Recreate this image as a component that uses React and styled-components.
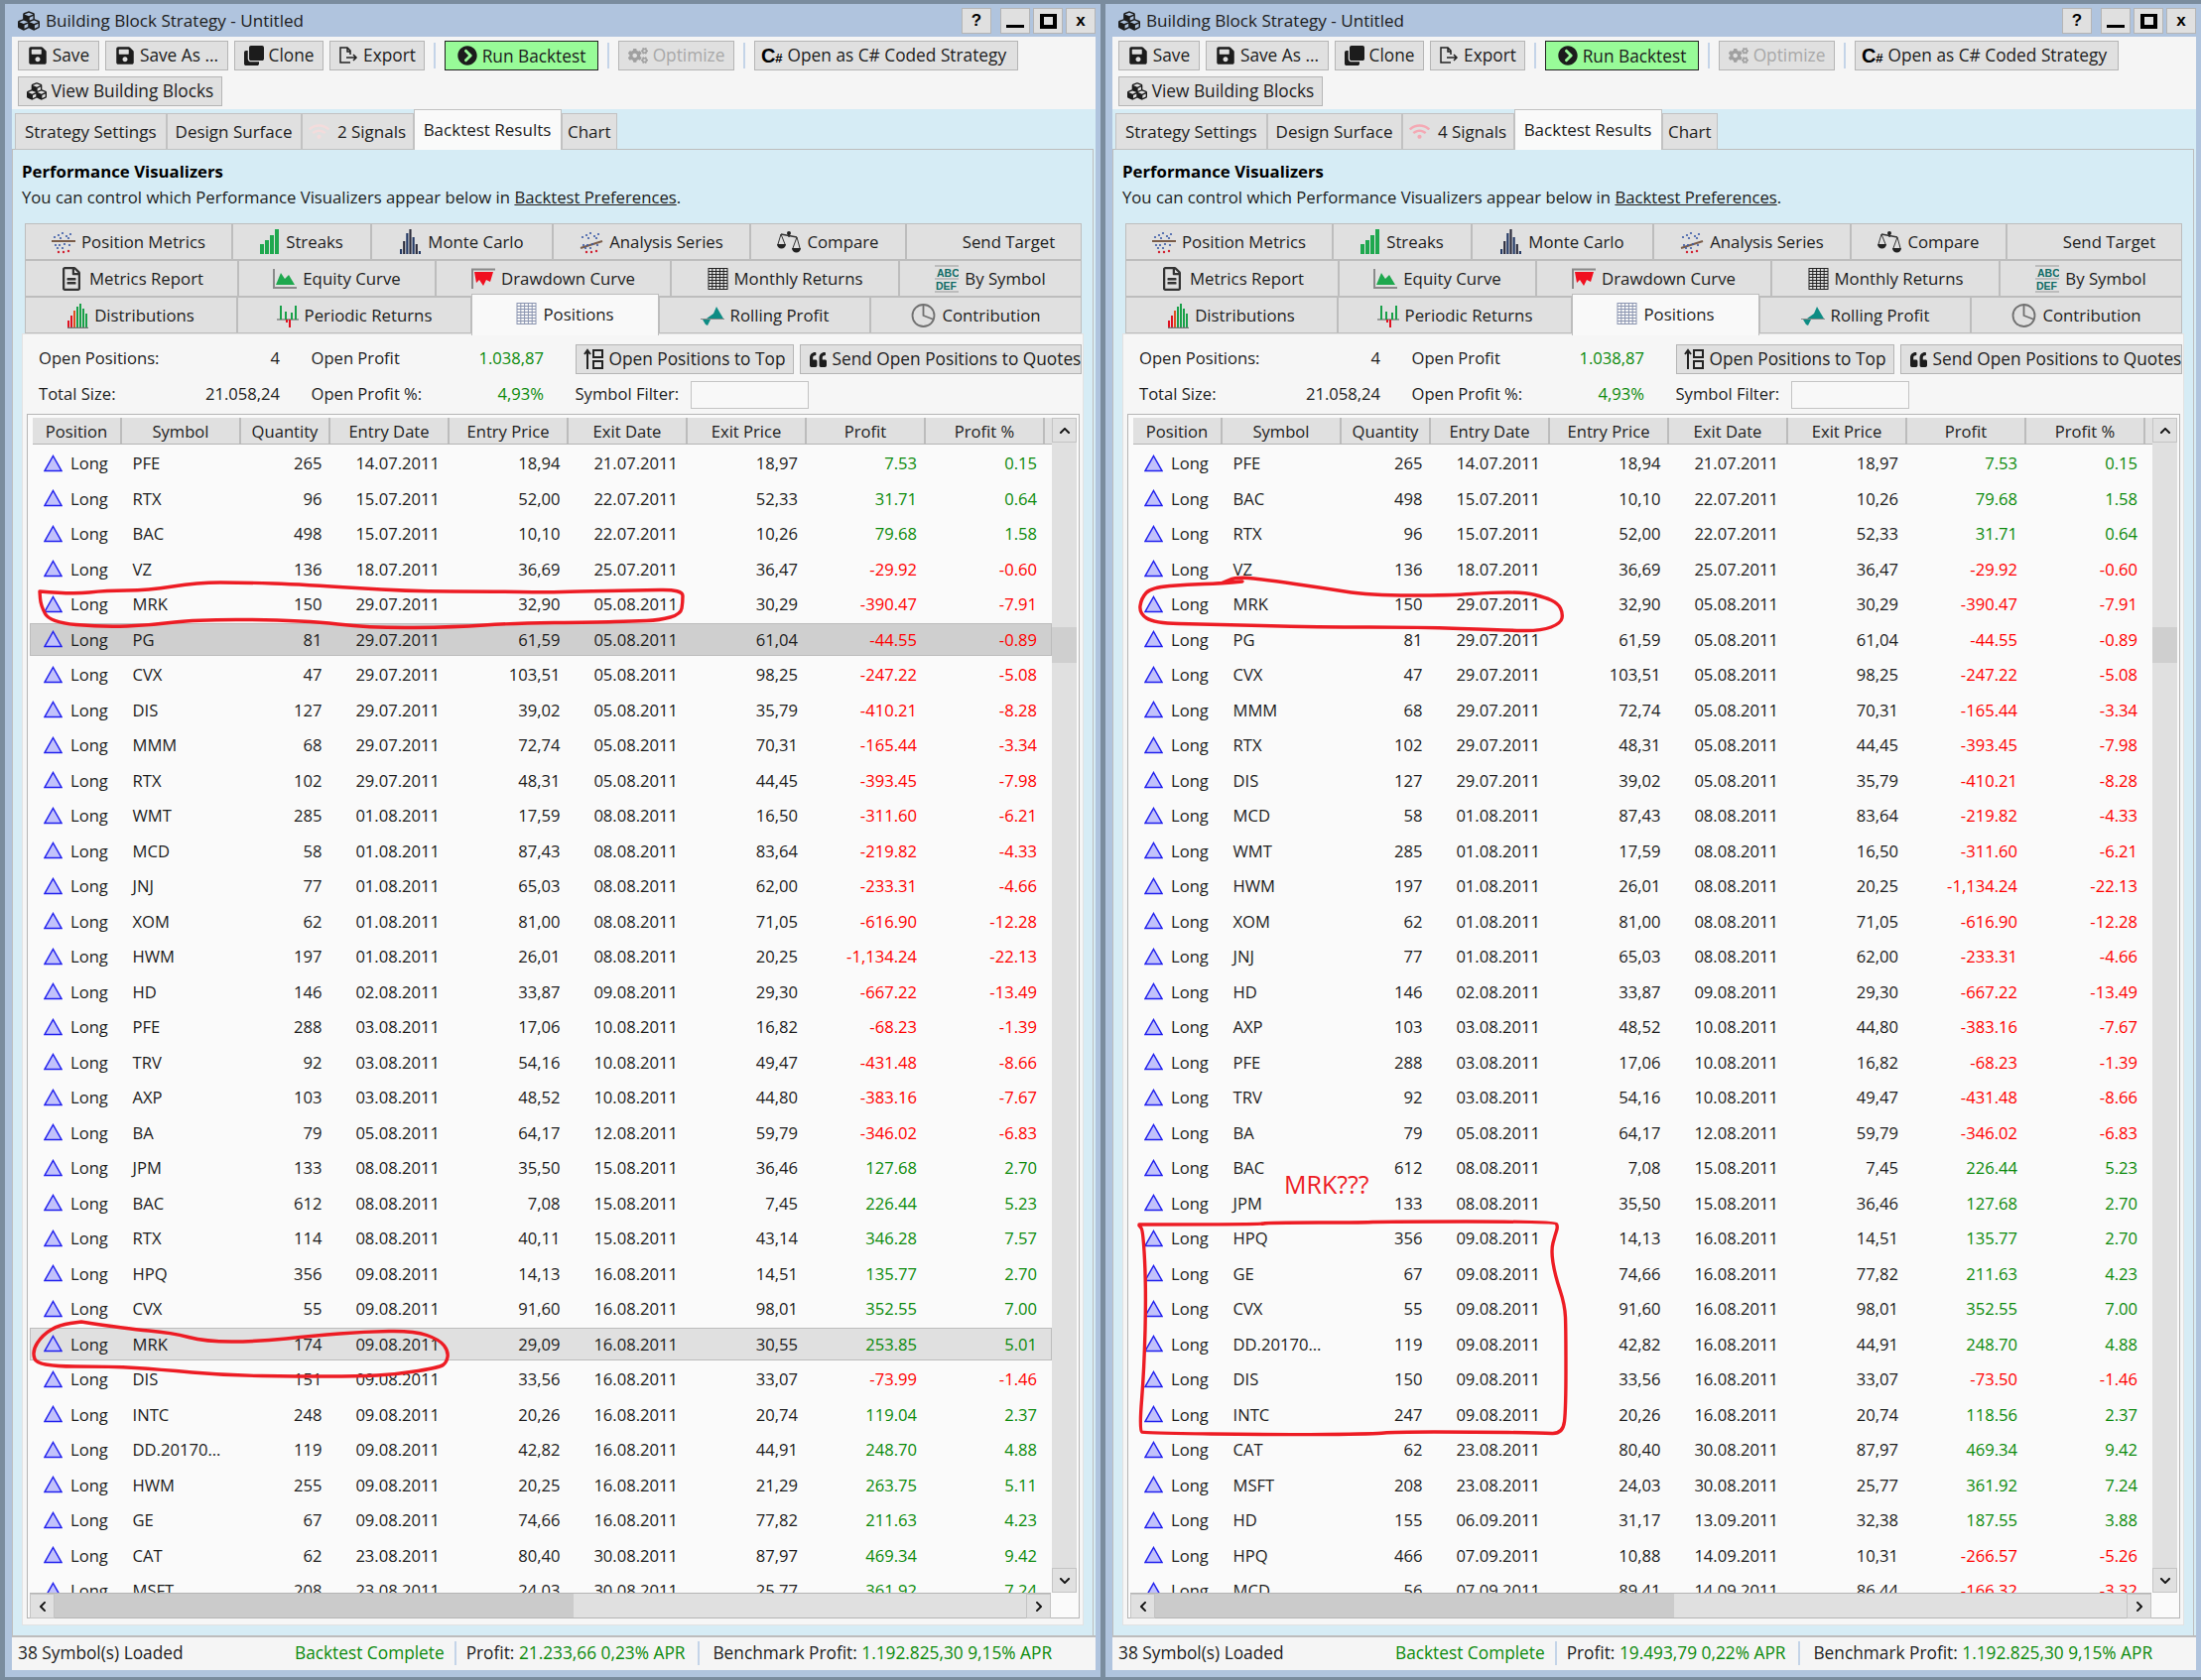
import React from "react";
import styled, { createGlobalStyle } from "styled-components";
import { FaSave, FaClone, FaCubes, FaChevronCircleRight, FaCogs, FaQuoteLeft, FaRegFileAlt, FaWifi, FaChevronUp, FaChevronDown, FaChevronLeft, FaChevronRight } from "react-icons/fa";

const leftRows = `PFE|265|14.07.2011|18,94|21.07.2011|18,97|7.53|0.15
RTX|96|15.07.2011|52,00|22.07.2011|52,33|31.71|0.64
BAC|498|15.07.2011|10,10|22.07.2011|10,26|79.68|1.58
VZ|136|18.07.2011|36,69|25.07.2011|36,47|-29.92|-0.60
MRK|150|29.07.2011|32,90|05.08.2011|30,29|-390.47|-7.91
PG|81|29.07.2011|61,59|05.08.2011|61,04|-44.55|-0.89
CVX|47|29.07.2011|103,51|05.08.2011|98,25|-247.22|-5.08
DIS|127|29.07.2011|39,02|05.08.2011|35,79|-410.21|-8.28
MMM|68|29.07.2011|72,74|05.08.2011|70,31|-165.44|-3.34
RTX|102|29.07.2011|48,31|05.08.2011|44,45|-393.45|-7.98
WMT|285|01.08.2011|17,59|08.08.2011|16,50|-311.60|-6.21
MCD|58|01.08.2011|87,43|08.08.2011|83,64|-219.82|-4.33
JNJ|77|01.08.2011|65,03|08.08.2011|62,00|-233.31|-4.66
XOM|62|01.08.2011|81,00|08.08.2011|71,05|-616.90|-12.28
HWM|197|01.08.2011|26,01|08.08.2011|20,25|-1,134.24|-22.13
HD|146|02.08.2011|33,87|09.08.2011|29,30|-667.22|-13.49
PFE|288|03.08.2011|17,06|10.08.2011|16,82|-68.23|-1.39
TRV|92|03.08.2011|54,16|10.08.2011|49,47|-431.48|-8.66
AXP|103|03.08.2011|48,52|10.08.2011|44,80|-383.16|-7.67
BA|79|05.08.2011|64,17|12.08.2011|59,79|-346.02|-6.83
JPM|133|08.08.2011|35,50|15.08.2011|36,46|127.68|2.70
BAC|612|08.08.2011|7,08|15.08.2011|7,45|226.44|5.23
RTX|114|08.08.2011|40,11|15.08.2011|43,14|346.28|7.57
HPQ|356|09.08.2011|14,13|16.08.2011|14,51|135.77|2.70
CVX|55|09.08.2011|91,60|16.08.2011|98,01|352.55|7.00
MRK|174|09.08.2011|29,09|16.08.2011|30,55|253.85|5.01
DIS|151|09.08.2011|33,56|16.08.2011|33,07|-73.99|-1.46
INTC|248|09.08.2011|20,26|16.08.2011|20,74|119.04|2.37
DD.20170...|119|09.08.2011|42,82|16.08.2011|44,91|248.70|4.88
HWM|255|09.08.2011|20,25|16.08.2011|21,29|263.75|5.11
GE|67|09.08.2011|74,66|16.08.2011|77,82|211.63|4.23
CAT|62|23.08.2011|80,40|30.08.2011|87,97|469.34|9.42
MSFT|208|23.08.2011|24,03|30.08.2011|25,77|361.92|7.24`;

const rightRows = `PFE|265|14.07.2011|18,94|21.07.2011|18,97|7.53|0.15
BAC|498|15.07.2011|10,10|22.07.2011|10,26|79.68|1.58
RTX|96|15.07.2011|52,00|22.07.2011|52,33|31.71|0.64
VZ|136|18.07.2011|36,69|25.07.2011|36,47|-29.92|-0.60
MRK|150|29.07.2011|32,90|05.08.2011|30,29|-390.47|-7.91
PG|81|29.07.2011|61,59|05.08.2011|61,04|-44.55|-0.89
CVX|47|29.07.2011|103,51|05.08.2011|98,25|-247.22|-5.08
MMM|68|29.07.2011|72,74|05.08.2011|70,31|-165.44|-3.34
RTX|102|29.07.2011|48,31|05.08.2011|44,45|-393.45|-7.98
DIS|127|29.07.2011|39,02|05.08.2011|35,79|-410.21|-8.28
MCD|58|01.08.2011|87,43|08.08.2011|83,64|-219.82|-4.33
WMT|285|01.08.2011|17,59|08.08.2011|16,50|-311.60|-6.21
HWM|197|01.08.2011|26,01|08.08.2011|20,25|-1,134.24|-22.13
XOM|62|01.08.2011|81,00|08.08.2011|71,05|-616.90|-12.28
JNJ|77|01.08.2011|65,03|08.08.2011|62,00|-233.31|-4.66
HD|146|02.08.2011|33,87|09.08.2011|29,30|-667.22|-13.49
AXP|103|03.08.2011|48,52|10.08.2011|44,80|-383.16|-7.67
PFE|288|03.08.2011|17,06|10.08.2011|16,82|-68.23|-1.39
TRV|92|03.08.2011|54,16|10.08.2011|49,47|-431.48|-8.66
BA|79|05.08.2011|64,17|12.08.2011|59,79|-346.02|-6.83
BAC|612|08.08.2011|7,08|15.08.2011|7,45|226.44|5.23
JPM|133|08.08.2011|35,50|15.08.2011|36,46|127.68|2.70
HPQ|356|09.08.2011|14,13|16.08.2011|14,51|135.77|2.70
GE|67|09.08.2011|74,66|16.08.2011|77,82|211.63|4.23
CVX|55|09.08.2011|91,60|16.08.2011|98,01|352.55|7.00
DD.20170...|119|09.08.2011|42,82|16.08.2011|44,91|248.70|4.88
DIS|150|09.08.2011|33,56|16.08.2011|33,07|-73.50|-1.46
INTC|247|09.08.2011|20,26|16.08.2011|20,74|118.56|2.37
CAT|62|23.08.2011|80,40|30.08.2011|87,97|469.34|9.42
MSFT|208|23.08.2011|24,03|30.08.2011|25,77|361.92|7.24
HD|155|06.09.2011|31,17|13.09.2011|32,38|187.55|3.88
HPQ|466|07.09.2011|10,88|14.09.2011|10,31|-266.57|-5.26
MCD|56|07.09.2011|89,41|14.09.2011|86,44|-166.32|-3.32`;

const parse = (s) => s.split("\n").map((l) => l.split("|"));

const GlobalStyle = createGlobalStyle`
  html, body { margin: 0; padding: 0; }
  body { font-family: "Open Sans", "Liberation Sans", sans-serif; font-size: 16.6px; color: #1c1c1c; }
`;

const Page = styled.div`
  position: relative;
  width: 2218px;
  height: 1693px;
  padding: 4px 0 3px 5px;
  box-sizing: border-box;
  background: #7a8c9e;
  display: flex;
  gap: 5px;
  overflow: hidden;
`;
const Win = styled.div`
  width: 1104px;
  display: flex;
  flex-direction: column;
  padding: 0 5px 7px 7px;
  box-sizing: border-box;
  background: #b0c4de;
`;
const TitleBar = styled.div`
  height: 33px;
  display: flex;
  align-items: center;
  padding-left: 6px;
  gap: 6px;
  flex: none;
  font-size: 17.1px;
  svg { font-size: 22px; }
`;
const TitleText = styled.span`
  flex: 1;
  padding-bottom: 1px;
`;
const WinBtns = styled.div`
  display: flex;
  margin-top: 1px;
`;
const WinBtn = styled.div`
  width: 30px;
  height: 26px;
  margin-left: ${(p) => p.$gap || 3}px;
  background: #e0e0e0;
  border: 1px solid #b5b5b5;
  box-sizing: border-box;
  display: flex;
  align-items: center;
  justify-content: center;
  font: bold 17px "Liberation Sans", sans-serif;
  color: #000;
`;
const MinBar = styled.span`
  width: 18px;
  height: 3px;
  margin-top: 10px;
  background: #000;
`;
const MaxBox = styled.span`
  width: 17px;
  height: 15px;
  box-sizing: border-box;
  border: solid #000;
  border-width: 3px 4px 4px;
`;
const Toolbar = styled.div`
  height: 73px;
  flex: none;
  background: #f5f5f5;
  padding: 4px 0 0 6px;
  box-sizing: border-box;
`;
const ToolRow = styled.div`
  display: flex;
  gap: 6px;
  height: 30px;
  margin-bottom: 6px;
`;
const ToolBtn = styled.div`
  width: ${(p) => p.$w}px;
  box-sizing: border-box;
  background: ${(p) => (p.$run ? "#98fb98" : "#e0e0e0")};
  border: 1px solid ${(p) => (p.$run ? "#222" : "#b5b5b5")};
  color: ${(p) => (p.$off ? "#a8a8a8" : "#1c1c1c")};
  font-size: 17.3px;
  padding: 0 ${(p) => p.$right || 0}px ${(p) => (p.$run ? 0 : 2)}px 0;
  display: flex;
  align-items: center;
  justify-content: center;
  gap: 5px;
  white-space: nowrap;
  overflow: hidden;
  svg { font-size: 20px; flex: none; margin-top: ${(p) => (p.$run ? 0 : 2)}px; color: ${(p) => (p.$off ? "#a0a0a0" : "#1c1c1c")}; }
`;
const ToolSep = styled.div`
  width: 2px;
  margin: 2px 3px;
  background: #c4d4e8;
`;
const CSharp = styled.span`
  font: 900 20px "Liberation Sans", sans-serif;
  color: #000;
  margin-top: 2px;
  small { font-size: 13px; }
`;
const Body = styled.div`
  flex: 1;
  min-height: 0;
  background: #d6ecf5;
  display: flex;
  flex-direction: column;
`;
const TabStrip = styled.div`
  height: 41px;
  flex: none;
  display: flex;
  align-items: flex-end;
  padding-left: 3px;
`;
const MainTab = styled.div`
  width: ${(p) => p.$w}px;
  height: ${(p) => (p.$on ? 41 : 37)}px;
  box-sizing: border-box;
  background: ${(p) => (p.$on ? "#fafafa" : "#e0e0e0")};
  border: 1px solid #c2c2c2;
  border-bottom: ${(p) => (p.$on ? "none" : "1px solid #c2c2c2")};
  font-size: 17px;
  display: flex;
  align-items: ${(p) => (p.$on ? "flex-start" : "center")};
  justify-content: center;
  padding-top: ${(p) => (p.$on ? 8 : 0)}px;
  gap: 8px;
  white-space: nowrap;
  position: relative;
  z-index: ${(p) => (p.$on ? 2 : 0)};
  svg { font-size: 21px; color: ${(p) => p.$tone}; }
`;
const Panel = styled.div`
  flex: 1;
  min-height: 0;
  margin: -1px 2px 0 0;
  border: 1px solid #bdbdbd;
  border-bottom: none;
  padding: 10px 0 0 9px;
  display: flex;
  flex-direction: column;
`;
const Heading = styled.div`
  height: 26px;
  line-height: 24px;
  font-weight: 700;
  font-size: 16.8px;
  color: #000;
`;
const Intro = styled.div`
  height: 25px;
  line-height: 24px;
  font-size: 16.7px;
  a { color: inherit; text-decoration: underline; }
`;
const VisTabs = styled.div`
  margin: 13px 0 0 3px;
  width: 1065px;
  flex: none;
`;
const VisRow = styled.div`
  display: flex;
  height: 37px;
`;
const VisTab = styled.div`
  width: ${(p) => p.$w}px;
  height: ${(p) => (p.$on ? 42 : 37)}px;
  margin-top: ${(p) => (p.$on ? -3 : 0)}px;
  box-sizing: border-box;
  background: ${(p) => (p.$on ? "#f9f9f9" : "#e0e0e0")};
  border: 1px solid #bdbdbd;
  border-bottom: ${(p) => (p.$on ? "none" : "1px solid #bdbdbd")};
  font-size: 16.8px;
  display: flex;
  align-items: center;
  justify-content: center;
  gap: 6px;
  white-space: nowrap;
  position: relative;
  z-index: ${(p) => (p.$on ? 2 : 0)};
  padding-bottom: ${(p) => (p.$on ? 3 : 0)}px;
  svg { flex: none; }
`;
const Spacer = styled.span`
  width: ${(p) => p.$w}px;
`;
const Sheet = styled.div`
  width: 1070px;
  flex: 1;
  min-height: 0;
  margin-bottom: 10px;
  box-sizing: border-box;
  background: #f6f6f6;
  border: 1px solid #e2e2e2;
  padding: 7px 0 0 4px;
`;
const Summary = styled.div`
  display: grid;
  grid-template-columns: 243px 234.5px 1fr;
  grid-auto-rows: 36px;
  column-gap: 31.5px;
  padding-left: 12px;
  margin-bottom: 1px;
`;
const Stat = styled.div`
  display: flex;
  justify-content: space-between;
  align-items: center;
  padding-bottom: 3px;
`;
const Good = styled.span`
  color: #0b8a0b;
`;
const SumActions = styled.div`
  display: flex;
  align-items: center;
  gap: 6px;
  width: 511px;
  overflow: hidden;
`;
const FilterLabel = styled.span`
  padding-bottom: 3px;
`;
const SumBtn = styled.div`
  width: ${(p) => p.$w}px;
  height: 30px;
  flex: none;
  box-sizing: border-box;
  background: #e0e0e0;
  border: 1px solid #b5b5b5;
  padding: 0 0 2px ${(p) => p.$pad}px;
  font-size: 17.3px;
  display: flex;
  align-items: center;
  gap: 6px;
  white-space: nowrap;
  overflow: hidden;
  svg { flex: none; margin-top: 2px; }
`;
const FilterBox = styled.div`
  width: 119px;
  height: 28px;
  margin-left: 6px;
  box-sizing: border-box;
  background: #f8f8f8;
  border: 1px solid #c4c4c4;
`;
const GridBox = styled.div`
  width: 1061px;
  height: 1214px;
  box-sizing: border-box;
  border: 1px solid #b5b5b5;
  padding: 3px 2px 0;
  display: grid;
  grid-template-columns: 1030px 25px;
  grid-template-rows: 1184px 26px;
  background: #fafafa;
`;
const TableArea = styled.div`
  min-width: 0;
  overflow: hidden;
  display: flex;
  flex-direction: column;
`;
const HeaderRow = styled.div`
  height: 27px;
  flex: none;
  margin: 0 0 2px 3px;
  display: grid;
  grid-template-columns: 90px 120px 90px 120px 120px 120px 120px 120px 120px 7px;
  background: #e0e0e0;
  border-bottom: 1px solid #b5b5b5;
  box-sizing: border-box;
`;
const HeaderCell = styled.div`
  display: flex;
  align-items: center;
  justify-content: center;
  border-right: 2px solid #bcbcbc;
  white-space: nowrap;
`;
const Row = styled.div`
  height: 33px;
  margin-bottom: 2.5px;
  flex: none;
  box-sizing: border-box;
  display: grid;
  grid-template-columns: 93px 120px 90px 120px 120px 120px 120px 120px 120px;
  align-items: center;
  background: ${(p) => (p.$mark === "dark" ? "#cfcfcf" : p.$mark === "light" ? "#e0e0e0" : "transparent")};
  box-shadow: ${(p) => (p.$mark ? "inset 0 0 0 1px #bcbcbc" : "none")};
  white-space: nowrap;
`;
const PosCell = styled.div`
  display: flex;
  align-items: center;
  gap: 8px;
  padding-left: 14px;
`;
const SymCell = styled.div`
  padding-left: 10.5px;
`;
const NumCell = styled.div`
  text-align: right;
  padding-right: ${(p) => p.$pad || 9}px;
  color: ${(p) => p.$tone || "inherit"};
`;
const VScroll = styled.div`
  display: flex;
  flex-direction: column;
  background: #e0e0e0;
`;
const ScrollGap = styled.div`
  height: ${(p) => p.$h}px;
  flex: ${(p) => (p.$h ? "none" : 1)};
  background: ${(p) => p.$tone || "#e0e0e0"};
`;
const ArrowBtn = styled.div`
  width: 25px;
  height: 25px;
  flex: none;
  box-sizing: border-box;
  background: #e0e0e0;
  border: 1px solid #c4c4c4;
  display: flex;
  align-items: center;
  justify-content: center;
  font-size: 12px;
  color: #111;
`;
const HScroll = styled.div`
  display: flex;
  width: 1029px;
  border-top: 1px solid #b5b5b5;
  border-bottom: 1px solid #b5b5b5;
  box-sizing: border-box;
  height: 26px;
  background: #e0e0e0;
`;
const HThumb = styled.div`
  width: 523px;
  background: #cbcbcb;
`;
const StatusBar = styled.div`
  height: 35px;
  flex: none;
  box-sizing: border-box;
  background: #f5f5f5;
  border-top: 2px solid #bdbdbd;
  padding: 0 0 2px 6px;
  font-size: 17.3px;
  display: flex;
  align-items: center;
  white-space: nowrap;
`;
const Loaded = styled.span`
  width: 279px;
`;
const StatusSep = styled.span`
  width: 2px;
  height: 24px;
  margin: 0 ${(p) => p.$gap}px;
  background: #c4d4e8;
`;
const Ink = styled.svg`
  position: absolute;
  left: 0;
  top: 0;
  pointer-events: none;
  z-index: 5;
`;
const Note = styled.div`
  position: absolute;
  left: 1294px;
  top: 1175px;
  z-index: 5;
  font-size: 25px;
  line-height: 36px;
  color: #ed1c24;
`;

const Triangle = () => (
  <svg width="19" height="18" viewBox="0 0 19 18">
    <polygon points="9.5,1.5 18,16.5 1,16.5" fill="#c2c2fb" stroke="#2020ee" strokeWidth="1.5" />
  </svg>
);
const ExportIcon = () => (
  <svg width="20" height="20" viewBox="0 0 20 20" fill="none" stroke="#222" strokeWidth="1.5">
    <path d="M12 17H2V2h7l3 3v4M9 2v4h3M8 12h10M15 9l3 3-3 3" />
  </svg>
);
const ScatterIcon = ({ flip }) => (
  <svg width="24" height="24" viewBox="0 0 24 24">
    {flip ? <path d="M1 18L23 11" stroke="#7a5c48" strokeWidth="2" /> : <path d="M0 11H24" stroke="#7a5c48" strokeWidth="2" />}
    {[[3, 7], [7, 5], [11, 3], [15, 6], [19, 4], [9, 8], [17, 8]].map(([x, y], i) => (
      <circle key={i} cx={x} cy={y} r="1.1" fill="#3b5ba8" />
    ))}
    {[[4, 15], [8, 15], [13, 14], [18, 15], [11, 18], [6, 18]].map(([x, y], i) => (
      <circle key={i} cx={x} cy={y} r="1.1" fill="#3b5ba8" />
    ))}
    {[[7, 22], [12, 22], [17, 21]].map(([x, y], i) => (
      <circle key={i} cx={x} cy={y} r="1.2" fill="#d02030" />
    ))}
  </svg>
);
const Bars = ({ data, w = 20, base }) => (
  <svg width={w} height="26" viewBox={`0 0 ${w} 26`}>
    {data.map(([h, color], i) => (
      <rect key={i} x={i * (w / data.length)} y={25 - h} width={w / data.length - 1} height={h} fill={color} />
    ))}
    {base && <path d={`M0 25.5H${w}`} stroke={base} strokeWidth="1.5" />}
  </svg>
);
const ScalesIcon = () => (
  <svg width="24" height="24" viewBox="0 0 24 24">
    <path d="M12 2V7M4 4L20 7" stroke="#333" strokeWidth="1.5" fill="none" />
    <path d="M4 4L1 14M4 4L8 14M20 7L16 18M20 7L23 18" stroke="#333" strokeWidth="1" fill="none" />
    <path d="M0 14H9A4.500 4.500 0 0 1 0 14ZM15 18H24A4.500 4.500 0 0 1 15 18Z" fill="#222" />
    <circle cx="12" cy="3" r="2" fill="#222" />
  </svg>
);
const EquityIcon = () => (
  <svg width="24" height="22" viewBox="0 0 24 22">
    <path d="M3 17L8 5l4 6 4-4 6 10z" fill="#1ea84e" />
    <path d="M1 1v19h23" fill="none" stroke="#8a8a8a" strokeWidth="2" />
  </svg>
);
const DrawdownIcon = () => (
  <svg width="24" height="22" viewBox="0 0 24 22">
    <path d="M3 4h19l-3 10-4-2-3 6-4-6-3 3z" fill="#f01020" />
    <path d="M1 21V1.500h23" fill="none" stroke="#8a8a8a" strokeWidth="2" />
  </svg>
);
const GridIcon = ({ tone = "#222", cols = 5 }) => (
  <svg width="21" height="24" viewBox="0 0 21 24" fill="none" stroke={tone} strokeWidth="1">
    {[0, 1, 2, 3, 4, 5, 6, 7].map((i) => (
      <path key={i} d={`M1 ${1.5 + i * 3}H20`} />
    ))}
    {Array.from({ length: cols + 1 }, (_, i) => (
      <path key={i} d={`M${1 + (i * 19) / cols} 1V23`} />
    ))}
  </svg>
);
const SymbolIcon = () => (
  <svg width="24" height="28" viewBox="0 0 24 28">
    <path d="M0 1H24M0 14H24M0 27H24" stroke="#999" strokeWidth="1" />
    <text x="2" y="12" fontFamily="Liberation Sans, sans-serif" fontWeight="700" fontSize="10.5" fill="#0e6b66">ABC</text>
    <text x="1" y="25" fontFamily="Liberation Sans, sans-serif" fontWeight="700" fontSize="10.5" fill="#0e6b66">DEF</text>
  </svg>
);
const PeriodicIcon = () => (
  <svg width="22" height="24" viewBox="0 0 22 24">
    <path d="M0 16H22" stroke="#555" strokeWidth="1" />
    <path d="M3 2h2v14H3zM8 8h2v8H8zM14 9h2v7h-2zM18 2h2v14h-2z" fill="#18a048" />
    <path d="M9 16h2v3H9zM12 16h2v8h-2z" fill="#e01020" />
  </svg>
);
const RollingIcon = () => (
  <svg width="24" height="22" viewBox="0 0 24 22">
    <path d="M6 14l7-5 3-7 4 7 3 5z" fill="#0e8c84" />
    <path d="M0 14.500H24" stroke="#888" strokeWidth="1" />
    <path d="M2 15h8l-3 6-2-1z" fill="#0e8c84" />
  </svg>
);
const PieIcon = () => (
  <svg width="25" height="28" viewBox="0 0 25 28" fill="none" stroke="#707070" strokeWidth="1.8">
    <circle cx="12.500" cy="14" r="11" />
    <path d="M12.500 3V14L23 18" />
  </svg>
);
const TopIcon = () => (
  <svg width="20" height="22" viewBox="0 0 20 22" fill="none" stroke="#222" strokeWidth="2">
    <path d="M4 21V3M1 6l3-4 3 4" />
    <rect x="10" y="2" width="9" height="7" />
    <rect x="10" y="13" width="9" height="7" />
  </svg>
);

const mainTabs = (signals, tone) => [
  { label: "Strategy Settings", w: 152.5 },
  { label: "Design Surface", w: 136 },
  { label: signals, w: 113, icon: <FaWifi />, tone },
  { label: "Backtest Results", w: 149, on: true },
  { label: "Chart", w: 56.5 },
];

const slate = "#2a2a3a";
const visRows = [
  [
    { label: "Position Metrics", w: 209, icon: <ScatterIcon /> },
    { label: "Streaks", w: 140, icon: <Bars w={20} data={[[10, "#1ea84e"], [14, "#1ea84e"], [19, "#1ea84e"], [25, "#1ea84e"]]} /> },
    { label: "Monte Carlo", w: 183, icon: <Bars w={22} data={[[5, "#243a66"], [13, slate], [21, "#243a66"], [25, slate], [17, "#243a66"], [10, slate], [3, "#243a66"]]} /> },
    { label: "Analysis Series", w: 199, icon: <ScatterIcon flip /> },
    { label: "Compare", w: 157, icon: <ScalesIcon /> },
    { label: "Send Target", w: 177, icon: <Spacer $w={24} /> },
  ],
  [
    { label: "Metrics Report", w: 215, icon: <FaRegFileAlt size={24} color="#333" /> },
    { label: "Equity Curve", w: 199, icon: <EquityIcon /> },
    { label: "Drawdown Curve", w: 237, icon: <DrawdownIcon /> },
    { label: "Monthly Returns", w: 230, icon: <GridIcon /> },
    { label: "By Symbol", w: 184, icon: <SymbolIcon /> },
  ],
  [
    { label: "Distributions", w: 214, icon: <Bars w={21} base="#777" data={[[7, "#e01020"], [12, "#e01020"], [17, "#e05020"], [21, "#18a048"], [24, "#18a048"], [19, "#18a048"], [14, "#18a048"]]} /> },
    { label: "Periodic Returns", w: 236, icon: <PeriodicIcon /> },
    { label: "Positions", w: 189, on: true, icon: <GridIcon tone="#8a94b0" /> },
    { label: "Rolling Profit", w: 213, icon: <RollingIcon /> },
    { label: "Contribution", w: 213, icon: <PieIcon /> },
  ],
];

const columns = ["Position", "Symbol", "Quantity", "Entry Date", "Entry Price", "Exit Date", "Exit Price", "Profit", "Profit %"];
const tone = (v) => (v.startsWith("-") ? "#ff0000" : "#0b8a0b");

const Window = ({ signals, signalTone, rows, marks, profit }) => (
  <Win>
    <TitleBar>
      <FaCubes />
      <TitleText>Building Block Strategy - Untitled</TitleText>
      <WinBtns>
        <WinBtn>?</WinBtn>
        <WinBtn $gap={9}><MinBar /></WinBtn>
        <WinBtn><MaxBox /></WinBtn>
        <WinBtn>x</WinBtn>
      </WinBtns>
    </TitleBar>
    <Toolbar>
      <ToolRow>
        <ToolBtn $w={82}><FaSave />Save</ToolBtn>
        <ToolBtn $w={124}><FaSave />Save As ...</ToolBtn>
        <ToolBtn $w={90}><FaClone />Clone</ToolBtn>
        <ToolBtn $w={96}><ExportIcon />Export</ToolBtn>
        <ToolSep />
        <ToolBtn $w={155} $run><FaChevronCircleRight />Run Backtest</ToolBtn>
        <ToolSep />
        <ToolBtn $w={117} $off><FaCogs />Optimize</ToolBtn>
        <ToolSep />
        <ToolBtn $w={266} $right={5}><CSharp>C<small>#</small></CSharp>Open as C# Coded Strategy</ToolBtn>
      </ToolRow>
      <ToolRow>
        <ToolBtn $w={206}><FaCubes />View Building Blocks</ToolBtn>
      </ToolRow>
    </Toolbar>
    <Body>
      <TabStrip>
        {mainTabs(signals, signalTone).map((t) => (
          <MainTab key={t.label} $w={t.w} $on={t.on} $tone={t.tone}>{t.icon}{t.label}</MainTab>
        ))}
      </TabStrip>
      <Panel>
        <Heading>Performance Visualizers</Heading>
        <Intro>You can control which Performance Visualizers appear below in <a>Backtest Preferences</a>.</Intro>
        <VisTabs>
          {visRows.map((row, i) => (
            <VisRow key={i}>
              {row.map((t) => (
                <VisTab key={t.label} $w={t.w} $on={t.on}>{t.icon}{t.label}</VisTab>
              ))}
            </VisRow>
          ))}
        </VisTabs>
        <Sheet>
          <Summary>
            <Stat><span>Open Positions:</span><span>4</span></Stat>
            <Stat><span>Open Profit</span><Good>1.038,87</Good></Stat>
            <SumActions>
              <SumBtn $w={220} $pad={7}><TopIcon />Open Positions to Top</SumBtn>
              <SumBtn $w={284} $pad={9}><FaQuoteLeft size={17} />Send Open Positions to Quotes</SumBtn>
            </SumActions>
            <Stat><span>Total Size:</span><span>21.058,24</span></Stat>
            <Stat><span>Open Profit %:</span><Good>4,93%</Good></Stat>
            <SumActions><FilterLabel>Symbol Filter:</FilterLabel><FilterBox /></SumActions>
          </Summary>
          <GridBox>
            <TableArea>
              <HeaderRow>
                {columns.map((c) => <HeaderCell key={c}>{c}</HeaderCell>)}
                <span />
              </HeaderRow>
              {rows.map((r, i) => (
                <Row key={i} $mark={marks[i]}>
                  <PosCell><Triangle />Long</PosCell>
                  <SymCell>{r[0]}</SymCell>
                  <NumCell $pad={8.5}>{r[1]}</NumCell>
                  <NumCell $pad={10}>{r[2]}</NumCell>
                  <NumCell $pad={8.5}>{r[3]}</NumCell>
                  <NumCell $pad={10}>{r[4]}</NumCell>
                  <NumCell>{r[5]}</NumCell>
                  <NumCell $tone={tone(r[6])}>{r[6]}</NumCell>
                  <NumCell $pad={8} $tone={tone(r[7])}>{r[7]}</NumCell>
                </Row>
              ))}
            </TableArea>
            <VScroll>
              <ArrowBtn><FaChevronUp /></ArrowBtn>
              <ScrollGap $h={186} />
              <ScrollGap $h={36} $tone="#cfcfcf" />
              <ScrollGap />
              <ArrowBtn><FaChevronDown /></ArrowBtn>
            </VScroll>
            <HScroll>
              <ArrowBtn><FaChevronLeft /></ArrowBtn>
              <HThumb />
              <ScrollGap />
              <ArrowBtn><FaChevronRight /></ArrowBtn>
            </HScroll>
          </GridBox>
        </Sheet>
      </Panel>
    </Body>
    <StatusBar>
      <Loaded>38 Symbol(s) Loaded</Loaded>
      <Good>Backtest Complete</Good>
      <StatusSep $gap={10} />
      <span>Profit:&nbsp;</span>
      <Good>{profit}</Good>
      <StatusSep $gap={13} />
      <span>Benchmark Profit:&nbsp;</span>
      <Good>1.192.825,30 9,15% APR</Good>
    </StatusBar>
  </Win>
);

// hand drawn marks, page coordinates
const smooth = (pts) => {
  let d = `M${pts[0][0]} ${pts[0][1]}`;
  for (let i = 1; i < pts.length - 1; i++) {
    const mx = (pts[i][0] + pts[i + 1][0]) / 2;
    const my = (pts[i][1] + pts[i + 1][1]) / 2;
    d += ` Q${pts[i][0]} ${pts[i][1]} ${mx} ${my}`;
  }
  const last = pts[pts.length - 1];
  return `${d} L${last[0]} ${last[1]}`;
};

const marksDrawn = [
  [[40, 596], [73, 599], [107, 595], [149, 595], [199, 587], [245, 587], [306, 589], [411, 596], [497, 596], [551, 597], [581, 596], [642, 595], [688, 594], [688, 607], [686, 619], [665, 625], [638, 626], [600, 627], [517, 628], [459, 632], [375, 633], [306, 625], [199, 624], [153, 630], [103, 632], [50, 627], [41, 610], [40, 596]],
  [[82, 1332], [127, 1339], [173, 1343], [207, 1352], [260, 1352], [317, 1346], [367, 1342], [417, 1341], [443, 1350], [452, 1362], [450, 1373], [443, 1378], [400, 1385], [360, 1387], [300, 1387], [227, 1386], [160, 1380], [113, 1377], [38, 1377], [32, 1362], [43, 1345], [60, 1335], [82, 1332]],
  [[1252, 586], [1230, 588], [1197, 589], [1160, 592], [1150, 603], [1148, 618], [1163, 628], [1213, 629], [1330, 632], [1430, 632], [1513, 635], [1553, 636], [1573, 628], [1575, 618], [1570, 608], [1557, 602], [1537, 597], [1503, 597], [1463, 600], [1380, 600], [1330, 592], [1280, 585], [1247, 581], [1230, 588]],
  [[1148, 1234], [1270, 1234], [1277, 1232], [1380, 1232], [1387, 1231], [1567, 1231], [1570, 1236], [1567, 1245], [1563, 1260], [1567, 1285], [1577, 1315], [1578, 1340], [1578, 1420], [1575, 1445], [1553, 1444], [1487, 1443], [1403, 1443], [1387, 1445], [1287, 1446], [1153, 1444], [1148, 1442], [1153, 1380], [1155, 1300], [1152, 1240], [1148, 1235]],
];

const left = parse(leftRows);
const right = parse(rightRows);

export default function App() {
  return (
    <Page>
      <GlobalStyle />
      <Window
        signals="2 Signals"
        signalTone="#f3dcdc"
        rows={left}
        marks={{ 5: "dark", 25: "light" }}
        profit="21.233,66 0,23% APR"
      />
      <Window
        signals="4 Signals"
        signalTone="#f4a9b4"
        rows={right}
        marks={{}}
        profit="19.493,79 0,22% APR"
      />
      <Ink width="2218" height="1693" viewBox="0 0 2218 1693" fill="none" stroke="#ed1c24" strokeWidth="3.4" strokeLinecap="round" strokeLinejoin="round">
        {marksDrawn.map((pts, i) => <path key={i} d={smooth(pts)} />)}
      </Ink>
      <Note>MRK???</Note>
    </Page>
  );
}
